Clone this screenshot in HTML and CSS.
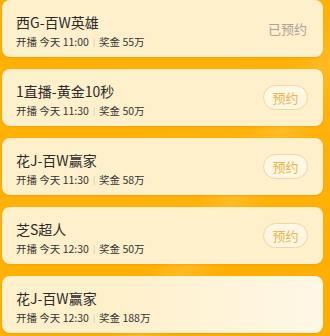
FILE: index.html
```html
<!DOCTYPE html>
<html lang="zh">
<head>
    <meta charset="UTF-8" />
    <title>预约列表</title>
    <link rel="stylesheet" href="styles.css">
</head>
<body>
<div class="list">
    <div class="card">
        <div class="info">
            <div class="title">西G-百W英雄</div>
            <div class="meta">开播 今天 11:00<span class="sep">|</span>奖金 55万</div>
        </div>
        <span class="done">已预约</span>
    </div>
    <div class="card">
        <div class="info">
            <div class="title">1直播-黄金10秒</div>
            <div class="meta">开播 今天 11:30<span class="sep">|</span>奖金 50万</div>
        </div>
        <button class="book-btn">预约</button>
    </div>
    <div class="card">
        <div class="info">
            <div class="title">花J-百W赢家</div>
            <div class="meta">开播 今天 11:30<span class="sep">|</span>奖金 58万</div>
        </div>
        <button class="book-btn">预约</button>
    </div>
    <div class="card">
        <div class="info">
            <div class="title">芝S超人</div>
            <div class="meta">开播 今天 12:30<span class="sep">|</span>奖金 50万</div>
        </div>
        <button class="book-btn">预约</button>
    </div>
    <div class="card card-last">
        <div class="info">
            <div class="title">花J-百W赢家</div>
            <div class="meta">开播 今天 12:30<span class="sep">|</span>奖金 188万</div>
        </div>
    </div>
</div>
</body>
</html>
```

FILE: styles.css
```css
* {
    box-sizing: border-box;
    margin: 0;
    padding: 0;
}

body {
    width: 330px;
    height: 336px;
    overflow: hidden;
    font-family: "Noto Sans CJK SC", "Noto Sans", sans-serif;
    background:
        linear-gradient(125deg, transparent 60%, rgba(255,210,100,0.3) 66%, transparent 72%),
        linear-gradient(160deg, #ffb000 0%, #ffb20a 50%, #ffae00 100%);
}

.list {
    display: flex;
    flex-direction: column;
    gap: 12px;
    padding: 0 7px 0 2px;
}

/* Single card */
.card {
    height: 57px;
    display: flex;
    align-items: center;
    justify-content: space-between;
    padding: 0 15px 0 14px;
    background: #fff0cc;
    border-radius: 8px;
    box-shadow: 0 1px 2px rgba(200,120,0,0.25);
}

.card-last {
    background: linear-gradient(90deg, #fff0cc 40%, #fff5dd 75%, #fff7e6 100%);
}

.info {
    margin-top: 6px;
}

.title {
    font-size: 14px;
    line-height: 18px;
    color: #2b2b2b;
}

.meta {
    margin-top: 4px;
    font-size: 10.5px;
    line-height: 14px;
    color: #333;
}

.sep {
    display: inline-block;
    margin: 0 4px;
    color: #bbb;
    font-size: 8px;
    transform: translateY(-1px);
}

.done {
    font-size: 13px;
    color: #a9a39a;
    margin-right: 1px;
}

.book-btn {
    width: 45px;
    height: 25px;
    border: 1px solid #efd79f;
    border-radius: 13px;
    background: #fff7e4;
    color: #e9b64a;
    font-family: inherit;
    font-size: 13px;
    line-height: 23px;
}
```
